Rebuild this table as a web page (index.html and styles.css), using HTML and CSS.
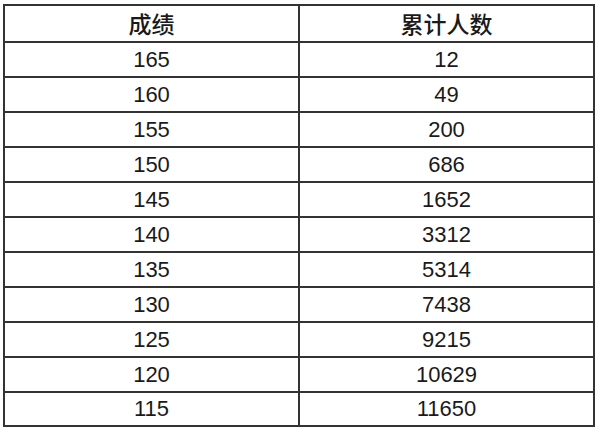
FILE: index.html
```html
<!DOCTYPE html>
<html lang="zh-CN">
<head>
<meta charset="utf-8">
<title>成绩累计人数</title>
<link rel="stylesheet" href="styles.css">
</head>
<body>
<table class="score-table">
  <thead>
    <tr class="head-row"><th>成绩</th><th>累计人数</th></tr>
  </thead>
  <tbody>
    <tr><td>165</td><td>12</td></tr>
    <tr><td>160</td><td>49</td></tr>
    <tr><td>155</td><td>200</td></tr>
    <tr><td>150</td><td>686</td></tr>
    <tr><td>145</td><td>1652</td></tr>
    <tr><td>140</td><td>3312</td></tr>
    <tr><td>135</td><td>5314</td></tr>
    <tr><td>130</td><td>7438</td></tr>
    <tr><td>125</td><td>9215</td></tr>
    <tr><td>120</td><td>10629</td></tr>
    <tr class="last-row"><td>115</td><td>11650</td></tr>
  </tbody>
</table>
</body>
</html>
```
FILE: styles.css
```css
html, body {
  margin: 0;
  padding: 0;
  background: #ffffff;
}
body {
  padding: 4px 0 0 3px;
  font-family: "Liberation Sans", "Noto Sans CJK SC", sans-serif;
  color: #1a1a1a;
}
.score-table {
  border-collapse: collapse;
  width: 592px;
  table-layout: fixed;
}
.score-table th,
.score-table td {
  border: 2px solid #333333;
  padding: 0;
  text-align: center;
  vertical-align: middle;
  font-size: 22px;
  font-weight: normal;
  line-height: 1;
  height: 33px;
}
.score-table th {
  height: 35px;
  font-family: "Noto Sans CJK SC", sans-serif;
  font-size: 23px;
  font-weight: 500;
}
.score-table .last-row td {
  height: 32px;
}
```
